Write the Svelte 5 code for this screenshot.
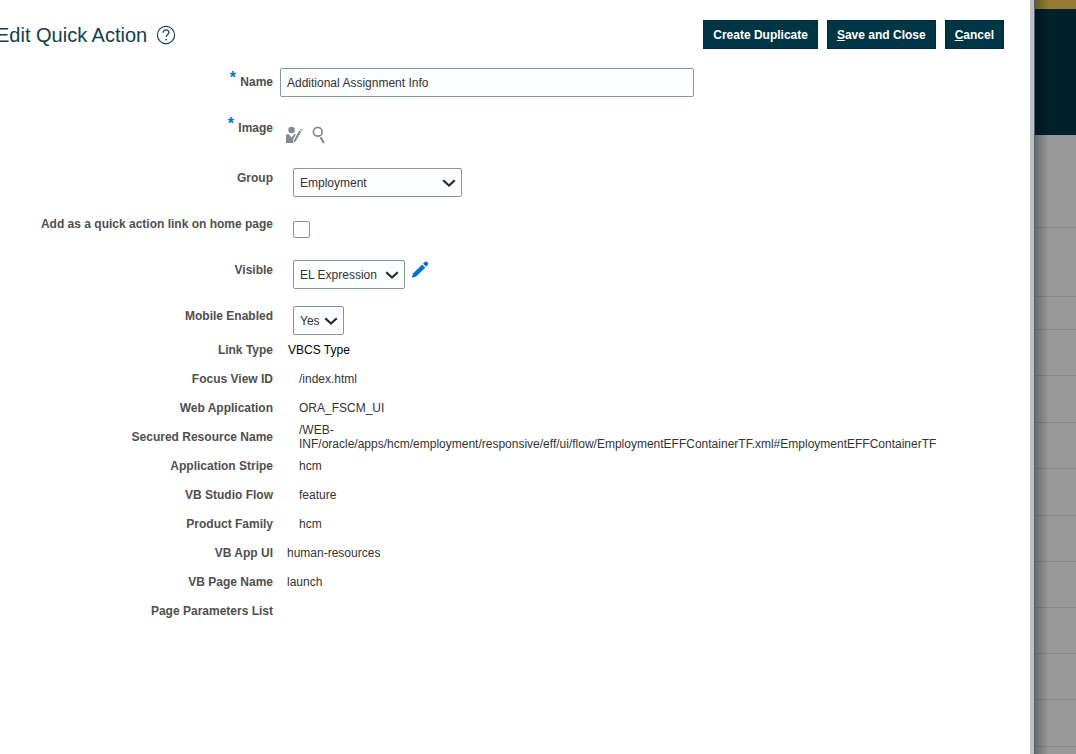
<script lang="ts">
  let name = $state("Additional Assignment Info");
  let group = $state("Employment");
  let visible = $state("EL Expression");
  let mobile = $state("Yes");
  let onHomePage = $state(false);

  const details = [
    { label: "Link Type", value: "VBCS Type", kind: "strong" },
    { label: "Focus View ID", value: "/index.html", kind: "indented" },
    { label: "Web Application", value: "ORA_FSCM_UI", kind: "indented" },
    {
      label: "Secured Resource Name",
      value:
        "/WEB-INF/oracle/apps/hcm/employment/responsive/eff/ui/flow/EmploymentEFFContainerTF.xml#EmploymentEFFContainerTF",
      kind: "indented",
    },
    { label: "Application Stripe", value: "hcm", kind: "indented" },
    { label: "VB Studio Flow", value: "feature", kind: "indented" },
    { label: "Product Family", value: "hcm", kind: "indented" },
    { label: "VB App UI", value: "human-resources", kind: "plain" },
    { label: "VB Page Name", value: "launch", kind: "plain" },
    { label: "Page Parameters List", value: "", kind: "plain" },
  ];

  // heights of the dimmed list rows behind the dialog
  const rows = [93, 69, 33, 46, 47, 46, 47, 46, 46, 46, 46, 47, 46];
</script>

{#snippet chevron()}
  <svg class="chevron" width="14" height="10" viewBox="0 0 14 10" aria-hidden="true">
    <path d="M1.2 2.2 L7 7.6 L12.8 2.2" fill="none" stroke="#2b2b2b" stroke-width="2.2" />
  </svg>
{/snippet}

<div class="page">
  <main class="dialog">
    <header>
      <h1>Edit Quick Action</h1>
      <button type="button" class="icon" aria-label="Help">
        <svg width="20" height="20" viewBox="0 0 20 20" fill="none" stroke="#1b4654">
          <circle cx="10" cy="10" r="8.6" stroke-width="1.2" />
          <path d="M7.2 7.8 C7.2 4 12.9 4.1 12.9 7.5 C12.9 9.7 10.1 9.6 10.1 12.1" stroke-width="1.3" />
          <circle cx="10.1" cy="14.6" r="0.9" fill="#1b4654" stroke="none" />
        </svg>
      </button>
      <div class="actions">
        <button type="button">Create Duplicate</button>
        <button type="button"><u>S</u>ave and Close</button>
        <button type="button"><u>C</u>ancel</button>
      </div>
    </header>

    <form>
      <div class="row field">
        <label for="name"><span class="required">*</span> Name</label>
        <div class="control">
          <input id="name" type="text" bind:value={name} />
        </div>
      </div>

      <div class="row field image">
        <span class="label"><span class="required">*</span> Image</span>
        <div class="control icons">
          <button type="button" class="icon" aria-label="Change image">
            <svg width="18" height="18" viewBox="0 0 18 18" fill="#858b8e">
              <circle cx="6.6" cy="4" r="3.3" />
              <path d="M1 9.2 Q1 8.2 2 8.2 H3.8 L6.6 11.4 L9.2 8.3 H11 L8.3 13 V17 H1 Z" />
              <path d="M14.3 4.6 L16.2 5.8 L10.9 15 L8.9 16.8 L9.2 13.8 Z" />
              <path d="M14.8 3.8 L15.4 2.8 L17.4 4 L16.7 5.1 Z" />
            </svg>
          </button>
          <button type="button" class="icon" aria-label="Search image">
            <svg width="18" height="18" viewBox="0 0 18 18" fill="none" stroke="#858b8e">
              <circle cx="6.8" cy="5.7" r="4.4" stroke-width="1.7" />
              <path d="M9.5 11.2 L12.8 17" stroke-width="2.2" />
            </svg>
          </button>
        </div>
      </div>

      <div class="row field">
        <label for="group">Group</label>
        <div class="control inset">
          <div class="select group">
            <select id="group" bind:value={group}>
              <option>Employment</option>
            </select>
            {@render chevron()}
          </div>
        </div>
      </div>

      <div class="row field">
        <label for="home">Add as a quick action link on home page</label>
        <div class="control inset check">
          <input id="home" type="checkbox" bind:checked={onHomePage} />
        </div>
      </div>

      <div class="row field">
        <label for="visible">Visible</label>
        <div class="control inset">
          <div class="select visible">
            <select id="visible" bind:value={visible}>
              <option>EL Expression</option>
            </select>
            {@render chevron()}
          </div>
          <button type="button" class="icon" aria-label="Edit expression">
            <svg width="18" height="18" viewBox="0 0 18 18" fill="#0572ce">
              <path d="M0.8 17.8 L2 13.5 L11.1 4.6 L14.3 7.8 L5.2 16.6 Z" />
              <path d="M12 3.7 L14 1.8 Q14.9 1 15.8 1.8 L16.8 2.8 Q17.6 3.8 16.8 4.7 L15.2 6.8 Z" />
            </svg>
          </button>
        </div>
      </div>

      <div class="row field last">
        <label for="mobile">Mobile Enabled</label>
        <div class="control inset">
          <div class="select mobile">
            <select id="mobile" bind:value={mobile}>
              <option>Yes</option>
              <option>No</option>
            </select>
            {@render chevron()}
          </div>
        </div>
      </div>

      {#each details as item}
        <div class="row detail">
          <span class="label">{item.label}</span>
          <span class="value {item.kind}">{item.value}</span>
        </div>
      {/each}
    </form>
  </main>

  <aside class="backdrop" aria-hidden="true">
    <div class="brand"></div>
    <div class="banner"></div>
    <div class="list">
      {#each rows as height}
        <div class="line" style="height: {height}px"></div>
      {/each}
    </div>
  </aside>
</div>

<style>
  :global(body) {
    background: #fff;
  }

  .page {
    display: flex;
    height: 100vh;
    overflow: hidden;
    font-family: "Liberation Sans", Arial, sans-serif;
    font-size: 12px;
    line-height: 14px;
    color: #333;
  }

  .dialog {
    flex: 1;
    min-width: 0;
    box-sizing: border-box;
    padding: 20px 26px 0 0;
    overflow: hidden;
    border-right: 4px solid #c0c0c0;
  }

  header {
    display: flex;
    align-items: center;
    height: 29px;
    margin-bottom: 19px;
  }

  h1 {
    margin: 0 9px 0 -4px;
    font-size: 20px;
    line-height: 24px;
    font-weight: 400;
    color: #11404f;
    white-space: nowrap;
  }

  .icon {
    display: flex;
    padding: 0;
    border: 0;
    background: none;
    cursor: pointer;
  }

  .actions {
    display: flex;
    gap: 9px;
    margin-left: auto;
  }

  .actions button {
    height: 29px;
    padding: 0 9px;
    border: 1px solid #002b38;
    background: #003545;
    color: #fff;
    font: bold 12px "Liberation Sans", Arial, sans-serif;
    white-space: nowrap;
    cursor: pointer;
  }

  .row {
    display: grid;
    grid-template-columns: 273px 1fr;
    column-gap: 7px;
  }

  .field {
    min-height: 46px;
  }

  .image {
    min-height: 50px;
  }

  .last {
    min-height: 33px;
  }

  label,
  .label {
    font-weight: 700;
    color: #4f4f4f;
    text-align: right;
  }

  .field > label,
  .field > .label {
    padding-top: 7px;
  }

  .required {
    margin-right: 1px;
    font-size: 16px;
    line-height: 0;
    vertical-align: 3px;
    color: #0572ce;
  }

  .control {
    display: flex;
    align-items: flex-start;
    gap: 6px;
  }

  .inset {
    padding: 4px 0 0 13px;
  }

  .icons {
    gap: 8px;
    padding: 12px 0 0 5px;
  }

  input[type="text"] {
    box-sizing: border-box;
    width: 414px;
    height: 29px;
    padding: 0 6px;
    border: 1px solid #8297a5;
    border-radius: 2px;
    background: #fcfdfe;
    font: inherit;
    color: #333;
  }

  .check {
    padding-top: 11px;
  }

  input[type="checkbox"] {
    appearance: none;
    box-sizing: border-box;
    width: 17px;
    height: 17px;
    margin: 0;
    border: 1px solid #8297a5;
    border-radius: 2px;
    background: #fcfdfe;
  }

  input[type="checkbox"]:checked {
    background: #0572ce;
  }

  .select {
    position: relative;
  }

  .select.group {
    width: 169px;
  }

  .select.visible {
    width: 112px;
  }

  .select.mobile {
    width: 51px;
  }

  select {
    appearance: none;
    box-sizing: border-box;
    width: 100%;
    height: 29px;
    padding: 0 6px;
    border: 1px solid #8297a5;
    border-radius: 2px;
    background: #fcfdfe;
    font: inherit;
    color: #333;
  }

  .chevron {
    position: absolute;
    top: 10px;
    right: 6px;
    pointer-events: none;
  }

  .detail {
    align-items: center;
    height: 29px;
  }

  .value {
    padding-left: 7px;
  }

  .indented {
    padding: 0 40px 0 19px;
  }

  .strong {
    padding-left: 8px;
    color: #000;
  }

  .backdrop {
    position: relative;
    flex: none;
    width: 41px;
    border-left: 1px solid #4b6273;
    background: #999;
  }

  /* shadow the dialog casts on the page behind it */
  .backdrop::after {
    content: "";
    position: absolute;
    inset: 0 auto 0 0;
    width: 14px;
    background: linear-gradient(to right, rgba(0, 0, 0, 0.3), rgba(0, 0, 0, 0));
  }

  .brand {
    height: 9px;
    background: #957c34;
  }

  .banner {
    height: 126px;
    background: #00202a;
  }

  .line {
    box-sizing: border-box;
    border-bottom: 1px solid #848a8c;
  }
</style>
